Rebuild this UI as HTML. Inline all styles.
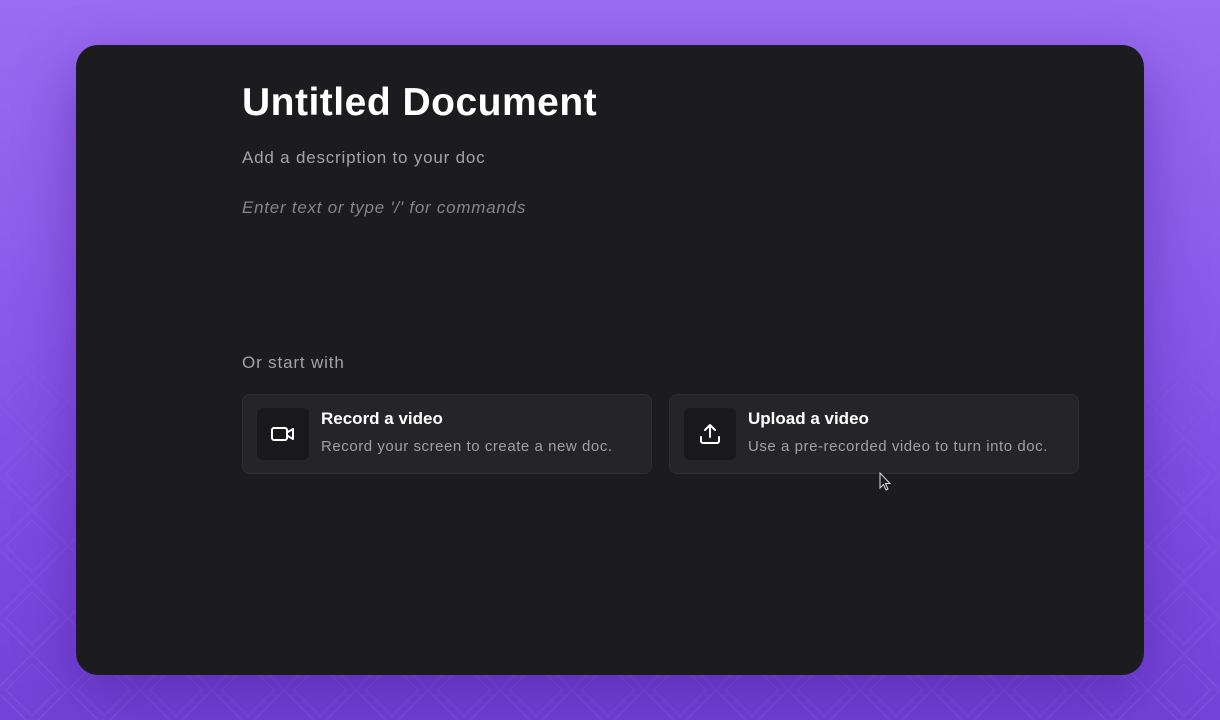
<!DOCTYPE html>
<html><head><meta charset="utf-8"><style>
*{margin:0;padding:0;box-sizing:border-box}
body{width:1220px;height:720px;overflow:hidden;position:relative;font-family:"Liberation Sans",sans-serif;
background:linear-gradient(180deg,#9a6cf2 0%,#8a58ea 45%,#7c4ae0 75%,#7442d6 100%);}
.pat{position:absolute;left:0;top:0;width:1220px;height:720px;
-webkit-mask-image:linear-gradient(180deg,transparent 35%,rgba(0,0,0,.6) 65%,#000 100%);
mask-image:linear-gradient(180deg,transparent 35%,rgba(0,0,0,.6) 65%,#000 100%);}
.card{position:absolute;left:76px;top:45px;width:1068px;height:630px;background:#1c1c1e;border-radius:22px;
box-shadow:0 20px 60px rgba(60,20,140,.45);}
h1{position:absolute;left:166px;top:36px;font-size:39px;font-weight:700;color:#fff;letter-spacing:0.5px}
.desc{position:absolute;left:166px;top:103px;font-size:17px;color:#a3a3a8;letter-spacing:0.8px}
.ph{position:absolute;left:166px;top:153px;font-size:17px;color:#85858a;font-style:italic;letter-spacing:0.75px}
.or{position:absolute;left:166px;top:308px;font-size:17px;color:#a3a3a8;letter-spacing:0.85px}
.opt{position:absolute;top:349px;width:410px;height:80px;background:#252527;border:1px solid #2e2e31;border-radius:8px}
.ic{position:absolute;left:14px;top:13px;width:52px;height:52px;background:#19191b;border-radius:6px;display:flex;align-items:center;justify-content:center}
.t{position:absolute;left:78px;top:14px;font-size:17px;font-weight:700;color:#fff}
.s{position:absolute;left:78px;top:43px;font-size:15px;color:#a0a0a5;letter-spacing:0.55px}
</style></head><body>
<svg class="pat" width="1220" height="720"><defs><pattern id="p" width="72" height="72" patternUnits="userSpaceOnUse" patternTransform="translate(-4,6)">
<path d="M36 0L72 36L36 72L0 36Z M36 10L62 36L36 62L10 36Z" fill="none" stroke="rgba(255,255,255,.06)" stroke-width="1.5"/></pattern></defs>
<rect width="1220" height="720" fill="url(#p)"/></svg>
<div class="card">
<h1>Untitled Document</h1>
<div class="desc">Add a description to your doc</div>
<div class="ph">Enter text or type '/' for commands</div>
<div class="or">Or start with</div>
<div class="opt" style="left:166px"><div class="ic"><svg width="26" height="20" viewBox="0 0 26 20" fill="none" stroke="#fff" stroke-width="2" stroke-linejoin="round"><rect x="2" y="4" width="15" height="12" rx="2"/><path d="M17 8.5L23 5V15L17 11.5"/></svg></div>
<div class="t">Record a video</div><div class="s">Record your screen to create a new doc.</div></div>
<div class="opt" style="left:593px"><div class="ic"><svg width="24" height="24" viewBox="0 0 24 24" fill="none" stroke="#fff" stroke-width="2" stroke-linecap="round" stroke-linejoin="round"><path d="M12 15V3M7 8l5-5 5 5M3 15v4a2 2 0 0 0 2 2h14a2 2 0 0 0 2-2v-4"/></svg></div>
<div class="t">Upload a video</div><div class="s">Use a pre-recorded video to turn into doc.</div></div>
</div>
<svg style="position:absolute;left:879px;top:472px" width="14" height="20" viewBox="0 0 14 20"><path d="M1 1V16L4.5 12.5L7 18L9 17L6.5 11.5H11Z" fill="#1c1c1e" stroke="#ddd" stroke-width="1"/></svg>
</body></html>
